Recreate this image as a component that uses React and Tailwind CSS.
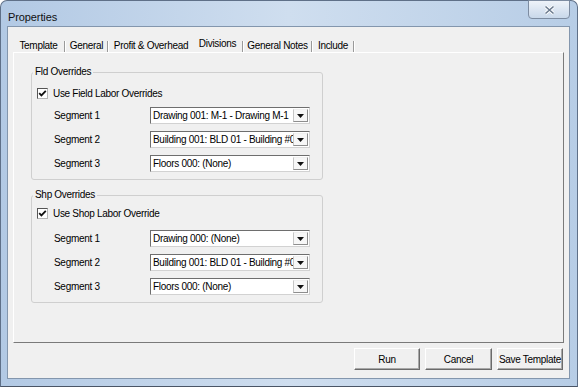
import React from "react";

const F = "font-['Liberation_Sans','Arial',sans-serif]";

function Tab({ label, w, selected, sep = true }) {
  return (
    <div className="flex h-full items-end">
      <div className={`flex justify-center h-[12px] leading-[12px] ${selected ? "mb-[2px]" : "mb-0"}`} style={{ width: w }}>
        <span className="whitespace-nowrap">{label}</span>
      </div>
      {sep && (
        <div className="flex h-[11px] mb-0">
          <div className="w-px h-full bg-[#9a9a9a]" />
          <div className="w-px h-full bg-white" />
        </div>
      )}
    </div>
  );
}

function Check() {
  return (
    <div className="w-[11px] h-[11px] bg-white border border-t-[#555] border-l-[#555] border-b-[#b5b5b5] border-r-[#b5b5b5] flex items-center justify-center">
      <svg width="9" height="9" viewBox="0 0 9 9">
        <path d="M1.2 4.2 L3.4 6.4 L7.8 1.8" fill="none" stroke="#111" strokeWidth="1.8" />
      </svg>
    </div>
  );
}

function Combo({ text }) {
  return (
    <div className="w-[160px] h-[17px] bg-white border border-t-[#6e6e6e] border-l-[#6e6e6e] border-b-[#d2d2d2] border-r-[#d2d2d2] flex items-stretch">
      <div className="flex-1 overflow-hidden whitespace-nowrap pl-[2px] leading-[15px]">{text}</div>
      <div className="w-[15px] my-[1px] mr-[1px] bg-[#f7f7f7] border border-t-[#f0f0f0] border-l-[#c6c6c6] border-b-[#8e8e8e] border-r-[#8e8e8e] flex items-center justify-center">
        <svg width="7" height="4" viewBox="0 0 7 4">
          <path d="M0 0 H7 L3.5 4 Z" fill="#111" />
        </svg>
      </div>
    </div>
  );
}

function Row({ label, value, mt }) {
  return (
    <div className={`flex items-center h-[17px] ${mt}`}>
      <div className="ml-[17px] w-[96px] whitespace-nowrap">{label}</div>
      <Combo text={value} />
    </div>
  );
}

function Group({ legend, check, values, outerMt, pt, firstMt }) {
  return (
    <fieldset className={`ml-[17px] ${outerMt} w-[292px] border border-[#cfcfcf] rounded-[3px]`}>
      <legend className="ml-[1px] px-[2px] leading-[12px]">{legend}</legend>
      <div className={`pl-[5px] ${pt} pb-[7px]`}>
        <div className="flex items-center h-[12px]">
          <Check />
          <span className="ml-[5px] whitespace-nowrap">{check}</span>
        </div>
        <Row label="Segment 1" value={values[0]} mt={firstMt} />
        <Row label="Segment 2" value={values[1]} mt="mt-[7px]" />
        <Row label="Segment 3" value={values[2]} mt="mt-[7px]" />
      </div>
    </fieldset>
  );
}

function Btn({ label, w }) {
  return (
    <div
      className="h-[22px] bg-[#f0f0f0] border border-t-white border-l-white border-b-[#6b6b6b] border-r-[#6b6b6b] shadow-[inset_-1px_-1px_0_#a8a8a8] flex items-center justify-center whitespace-nowrap"
      style={{ width: w }}
    >
      {label}
    </div>
  );
}

export default function App() {
  return (
    <div className={`${F} w-[578px] h-[387px] rounded-t-[7px] border border-[#5f7088] border-b-[#4a5566] bg-gradient-to-r from-[#b2c9e4] via-[#cfdeef] to-[#b7cde6] flex flex-col text-[10px] tracking-[-0.3px] text-black`}>
      <div className="h-[25px] flex items-start justify-between pl-[7px] pr-[7px]">
        <span className="mt-[9px] text-[11px] leading-[14px] tracking-[-0.1px] text-[#111]">Properties</span>
        <div className="mt-[-1px] w-[42px] h-[19px] rounded-b-[4px] border border-[#7d8ca1] bg-gradient-to-b from-[#eef3f9] to-[#c9d8ea] flex items-center justify-center">
          <svg width="11" height="10" viewBox="0 0 11 10">
            <path d="M1.5 1.5 L9.5 8.5 M9.5 1.5 L1.5 8.5" stroke="#fff" strokeWidth="3.2" />
            <path d="M1.5 1.5 L9.5 8.5 M9.5 1.5 L1.5 8.5" stroke="#6a7a8e" strokeWidth="1.6" />
          </svg>
        </div>
      </div>
      <div className="ml-[6px] mr-[7px] mb-[7px] h-[353px] border border-[#8396ad] bg-[#f0f0f0] flex flex-col">
        <div className="h-[25px] pl-[5px] flex items-end">
          <Tab label="Template" w={51} />
          <Tab label="General" w={41} />
          <Tab label="Profit & Overhead" w={84} sep={false} />
          <Tab label="Divisions" w={49} selected />
          <Tab label="General Notes" w={67} />
          <Tab label="Include" w={40} />
        </div>
        <div className="ml-[5px] mr-[5px] h-[291px] border border-t-white border-l-white border-b-[#7a7a7a] border-r-[#7a7a7a] flex flex-col">
          <Group
            legend="Fld Overrides"
            check="Use Field Labor Overrides"
            values={["Drawing 001: M-1 - Drawing M-1", "Building 001: BLD 01 - Building #01", "Floors 000: (None)"]}
            outerMt="mt-[13px]"
            pt="pt-[9px]"
            firstMt="mt-[8px]"
          />
          <Group
            legend="Shp Overrides"
            check="Use Shop Labor Override"
            values={["Drawing 000: (None)", "Building 001: BLD 01 - Building #01", "Floors 000: (None)"]}
            outerMt="mt-[9px]"
            pt="pt-[6px]"
            firstMt="mt-[11px]"
          />
        </div>
        <div className="mt-[5px] pr-[6px] flex justify-end gap-[5px]">
          <Btn label="Run" w={66} />
          <Btn label="Cancel" w={67} />
          <Btn label="Save Template" w={66} />
        </div>
      </div>
    </div>
  );
}
